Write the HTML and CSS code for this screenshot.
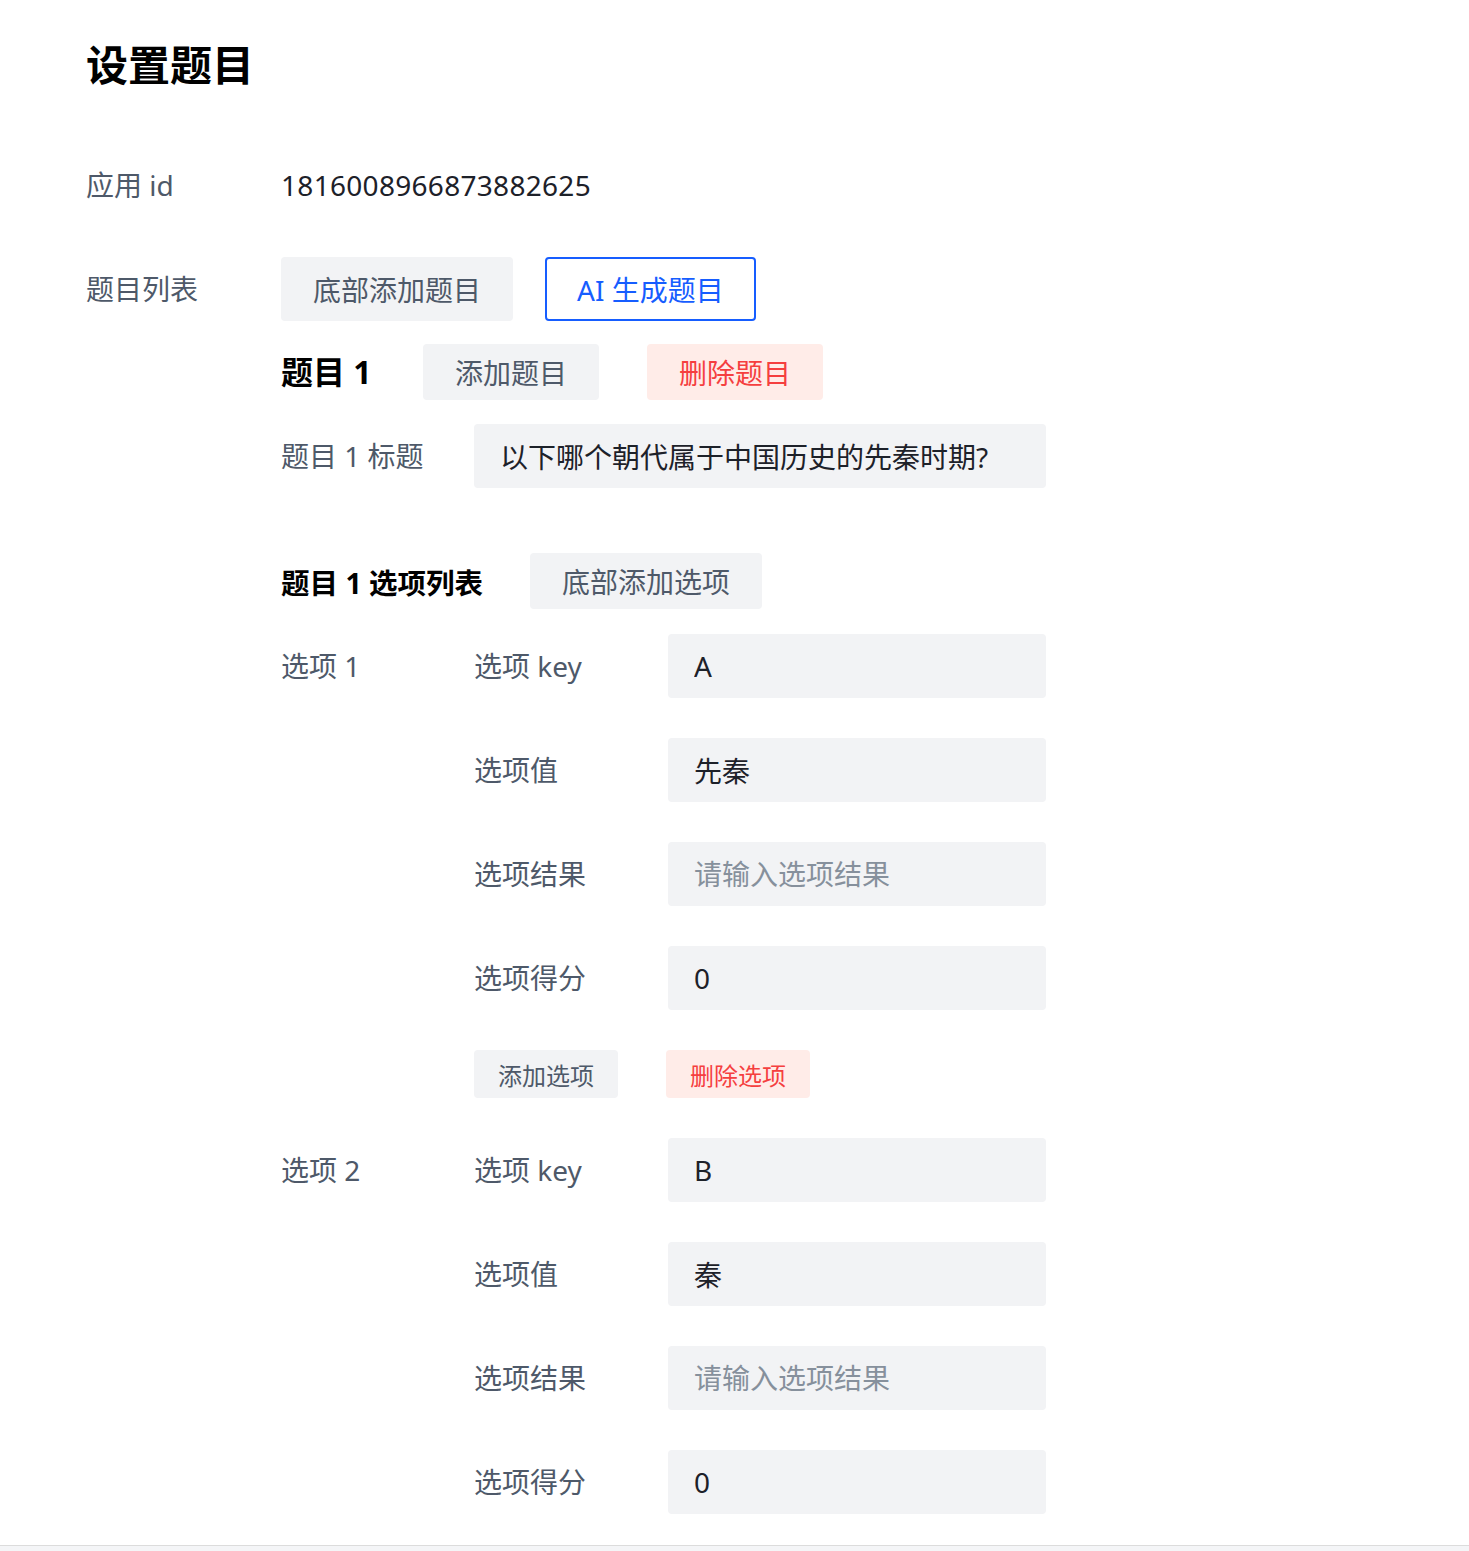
FILE: index.html
```html
<!DOCTYPE html>
<html lang="zh-CN">
<head>
<meta charset="utf-8">
<title>设置题目</title>
<link rel="stylesheet" href="styles.css">
</head>
<body>
<div class="page">
  <h1 class="title">设置题目</h1>
  <div class="form">
    <div class="item">
      <div class="label">应用 id</div>
      <div class="control"><span class="value">1816008966873882625</span></div>
    </div>
    <div class="item">
      <div class="label">题目列表</div>
      <div class="control">
        <div class="btn-row">
          <button class="btn btn-gray">底部添加题目</button>
          <button class="btn btn-outline">AI 生成题目</button>
        </div>
        <div class="question">
          <div class="q-head">
            <h3 class="q-title">题目 1</h3>
            <button class="btn btn-small btn-gray">添加题目</button>
            <button class="btn btn-small btn-danger">删除题目</button>
          </div>
          <div class="item q-title-item">
            <div class="label lbl-193">题目 1 标题</div>
            <div class="control"><input class="input" type="text" value="以下哪个朝代属于中国历史的先秦时期?"></div>
          </div>
          <div class="list-head">
            <div class="list-title">题目 1 选项列表</div>
            <button class="btn btn-small btn-gray">底部添加选项</button>
          </div>

          <div class="option">
            <div class="label lbl-193">选项 1</div>
            <div class="control">
              <div class="item">
                <div class="label">选项 key</div>
                <div class="control"><input class="input" type="text" value="A"></div>
              </div>
              <div class="item">
                <div class="label">选项值</div>
                <div class="control"><input class="input" type="text" value="先秦"></div>
              </div>
              <div class="item">
                <div class="label">选项结果</div>
                <div class="control"><input class="input" type="text" placeholder="请输入选项结果"></div>
              </div>
              <div class="item">
                <div class="label">选项得分</div>
                <div class="control"><input class="input" type="text" value="0"></div>
              </div>
              <div class="opt-actions">
                <button class="btn btn-mini btn-gray">添加选项</button>
                <button class="btn btn-mini btn-danger">删除选项</button>
              </div>
            </div>
          </div>

          <div class="option">
            <div class="label lbl-193">选项 2</div>
            <div class="control">
              <div class="item">
                <div class="label">选项 key</div>
                <div class="control"><input class="input" type="text" value="B"></div>
              </div>
              <div class="item">
                <div class="label">选项值</div>
                <div class="control"><input class="input" type="text" value="秦"></div>
              </div>
              <div class="item">
                <div class="label">选项结果</div>
                <div class="control"><input class="input" type="text" placeholder="请输入选项结果"></div>
              </div>
              <div class="item">
                <div class="label">选项得分</div>
                <div class="control"><input class="input" type="text" value="0"></div>
              </div>
            </div>
          </div>
        </div>
      </div>
    </div>
  </div>
</div>
<div class="footer"></div>
</body>
</html>
```

FILE: styles.css
```css
* { box-sizing: border-box; }

html, body {
  margin: 0;
  padding: 0;
  background: #fff;
}

body {
  font-family: "Noto Sans", "Noto Sans CJK SC", sans-serif;
  font-size: 28px;
  color: #1d2129;
}

.page {
  padding: 35px 0 0 86px;
  width: 1046px;
}

.title {
  margin: 0 0 58px 0;
  font-size: 42px;
  line-height: 60px;
  font-weight: 700;
  color: #000;
}

.form {
  display: flex;
  flex-direction: column;
}

.item {
  display: flex;
  align-items: flex-start;
  margin-bottom: 40px;
}

.label {
  flex: 0 0 195px;
  width: 195px;
  line-height: 64px;
  height: 64px;
  color: #4e5969;
  font-size: 28px;
  white-space: nowrap;
}

.item .item .label,
.option .control .label {
  flex-basis: 194px;
  width: 194px;
}

.lbl-193,
.option > .lbl-193,
.item .item > .lbl-193 {
  flex-basis: 193px;
  width: 193px;
}

.control {
  flex: 1 1 auto;
  min-width: 0;
  display: flex;
  flex-direction: column;
}

.value {
  line-height: 64px;
  color: #1d2129;
  letter-spacing: 0.3px;
}

.btn-row {
  display: flex;
  gap: 32px;
}

.btn {
  font-family: inherit;
  display: inline-flex;
  align-items: center;
  justify-content: center;
  height: 64px;
  padding: 0 30px;
  border: 2px solid transparent;
  border-radius: 4px;
  font-size: 28px;
  cursor: pointer;
  white-space: nowrap;
}

.btn-gray {
  background: #f2f3f5;
  color: #4e5969;
}

.btn-outline {
  background: #fff;
  border-color: #165dff;
  color: #165dff;
}

.btn-danger {
  background: #ffece8;
  color: #f53f3f;
}

.btn-small {
  height: 56px;
  font-size: 28px;
  padding: 0 30px;
}

.btn-mini {
  height: 48px;
  font-size: 24px;
  padding: 0 22px;
}

.question {
  margin-top: 23px;
  display: flex;
  flex-direction: column;
}

.q-head {
  display: flex;
  align-items: center;
  gap: 48px;
  height: 56px;
}

.q-title {
  margin: 0;
  font-size: 32px;
  font-weight: 700;
  color: #000;
  line-height: 56px;
  width: 94px;
  white-space: nowrap;
}

.q-title-item {
  margin-top: 24px;
}

.input {
  font-family: inherit;
  display: block;
  width: 100%;
  height: 64px;
  padding: 0 24px;
  border: 2px solid transparent;
  border-radius: 4px;
  background: #f2f3f5;
  color: #1d2129;
  font-size: 28px;
  outline: none;
}

.input::placeholder {
  color: #86909c;
  opacity: 1;
}

.list-head {
  display: flex;
  align-items: center;
  height: 56px;
  margin-top: 25px;
}

.list-title {
  width: 249px;
  font-size: 28.5px;
  font-weight: 700;
  color: #000;
  white-space: nowrap;
}

.option {
  display: flex;
  align-items: flex-start;
  margin-top: 25px;
}

.option + .option {
  margin-top: 0;
}

.opt-actions {
  display: flex;
  gap: 48px;
  margin-bottom: 40px;
}

.footer {
  position: fixed;
  left: 0;
  right: 0;
  bottom: 0;
  height: 6px;
  background: #f4f5f7;
  border-top: 1px solid #dcdcdc;
}
```
